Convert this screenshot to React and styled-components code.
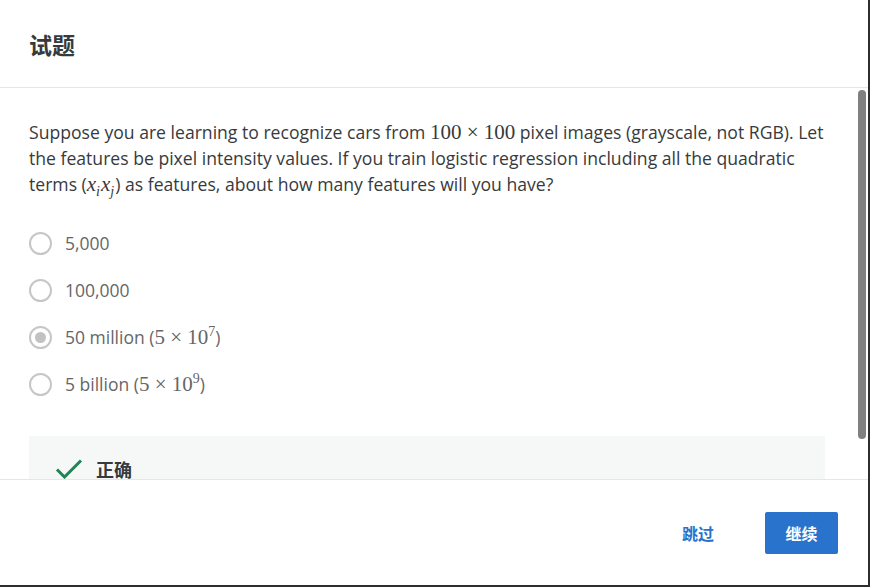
import React from 'react';
import styled, { createGlobalStyle } from 'styled-components';

const
  GlobalStyle = createGlobalStyle`
    html, body {
      margin: 0;
      padding: 0;
      background: #2e2e2e;
    }
    body {
      font-family: "Open Sans", "Noto Sans CJK SC", sans-serif;
    }
  `,
  Dialog = styled.div`
    width: 868px;
    height: 585px;
    background: #fff;
    display: flex;
    flex-direction: column;
    overflow: hidden;
  `,
  Header = styled.header`
    height: 88px;
    flex: none;
    display: flex;
    align-items: center;
    padding: 0 29px;
    border-bottom: 1px solid #e6e6e6;
    box-sizing: border-box;
  `,
  Title = styled.h2`
    margin: 0;
    font-family: "Noto Sans CJK SC", sans-serif;
    font-size: 23px;
    font-weight: 700;
    color: #373a3c;
  `,
  Body = styled.div`
    position: relative;
    flex: 1;
    min-height: 0;
    overflow: hidden;
  `,
  Content = styled.div`
    padding: 0 43px 0 29px;
  `,
  ScrollThumb = styled.div`
    position: absolute;
    top: 2px;
    right: 2px;
    width: 8px;
    height: 349px;
    border-radius: 4px;
    background: #808080;
  `,
  Prompt = styled.p`
    margin: 31px 0 33px;
    font-size: 17.6px;
    line-height: 26px;
    color: #373a3c;
  `,
  Math = styled.span`
    font-family: "Liberation Serif", serif;
    font-size: 21px;
    line-height: 0;
    font-style: ${p => (p.$italic ? 'italic' : 'normal')};
  `,
  Sub = styled.sub`
    font-size: 14px;
    line-height: 0;
    margin-right: 1px;
  `,
  Sup = styled.sup`
    font-size: 14px;
    line-height: 0;
  `,
  Options = styled.div`
    display: flex;
    flex-direction: column;
    gap: 21px;
  `,
  Option = styled.label`
    display: flex;
    align-items: center;
    gap: 13px;
    height: 26px;
    font-size: 17.5px;
    color: #666;
  `,
  Radio = styled.span`
    flex: none;
    width: 23px;
    height: 23px;
    border-radius: 50%;
    border: 2px solid #c6c6c6;
    box-sizing: border-box;
    display: flex;
    align-items: center;
    justify-content: center;

    &::after {
      content: '';
      width: 11px;
      height: 11px;
      border-radius: 50%;
      background: ${p => (p.$checked ? '#c2c2c2' : 'transparent')};
    }
  `,
  Feedback = styled.div`
    margin: 39px 0 24px;
    background: #f5f8f7;
    padding: 20px 26px 32px;
    display: flex;
    align-items: center;
    gap: 13px;
  `,
  FeedbackLabel = styled.span`
    font-family: "Noto Sans CJK SC", sans-serif;
    font-size: 18px;
    font-weight: 700;
    color: #373a3c;
  `,
  Footer = styled.footer`
    height: 106px;
    flex: none;
    border-top: 1px solid #e6e6e6;
    box-sizing: border-box;
    display: flex;
    align-items: center;
    justify-content: flex-end;
    gap: 51px;
    padding: 0 30px 0 0;
  `,
  LinkButton = styled.button`
    border: none;
    background: none;
    padding: 0;
    font-family: "Noto Sans CJK SC", sans-serif;
    font-size: 16px;
    font-weight: 700;
    color: #2a73cc;
    cursor: pointer;
  `,
  PrimaryButton = styled.button`
    width: 73px;
    height: 42px;
    border: none;
    border-radius: 2px;
    background: #2a73cc;
    color: #fff;
    font-family: "Noto Sans CJK SC", sans-serif;
    font-size: 16px;
    font-weight: 700;
    cursor: pointer;
  `;

const Check = () => (
  <svg width="28" height="22" viewBox="0 0 28 22">
    <path d="M2 11.5 L9.5 19 L26 2.5" fill="none" stroke="#1f8354" strokeWidth="3" />
  </svg>
);

const options = [
  { label: '5,000' },
  { label: '100,000' },
  { label: '50 million (', pow: '7', checked: true },
  { label: '5 billion (', pow: '9' },
];

const App = () => {
  return (
    <>
      <GlobalStyle />
      <Dialog>
        <Header>
          <Title>试题</Title>
        </Header>
        <Body>
          <Content>
            <Prompt>
              Suppose you are learning to recognize cars from <Math>100 × 100</Math> pixel images
              (grayscale, not RGB). Let the features be pixel intensity values. If you train logistic
              regression including all the quadratic terms (<Math $italic>x<Sub>i</Sub>x<Sub>j</Sub></Math>)
              as features, about how many features will you have?
            </Prompt>
            <Options>
              {options.map(o => (
                <Option key={o.label}>
                  <Radio $checked={o.checked} />
                  <span>
                    {o.label}
                    {o.pow && (
                      <>
                        <Math>5 × 10<Sup>{o.pow}</Sup></Math>)
                      </>
                    )}
                  </span>
                </Option>
              ))}
            </Options>
            <Feedback>
              <Check />
              <FeedbackLabel>正确</FeedbackLabel>
            </Feedback>
          </Content>
          <ScrollThumb />
        </Body>
        <Footer>
          <LinkButton>跳过</LinkButton>
          <PrimaryButton>继续</PrimaryButton>
        </Footer>
      </Dialog>
    </>
  );
};

export default App;
